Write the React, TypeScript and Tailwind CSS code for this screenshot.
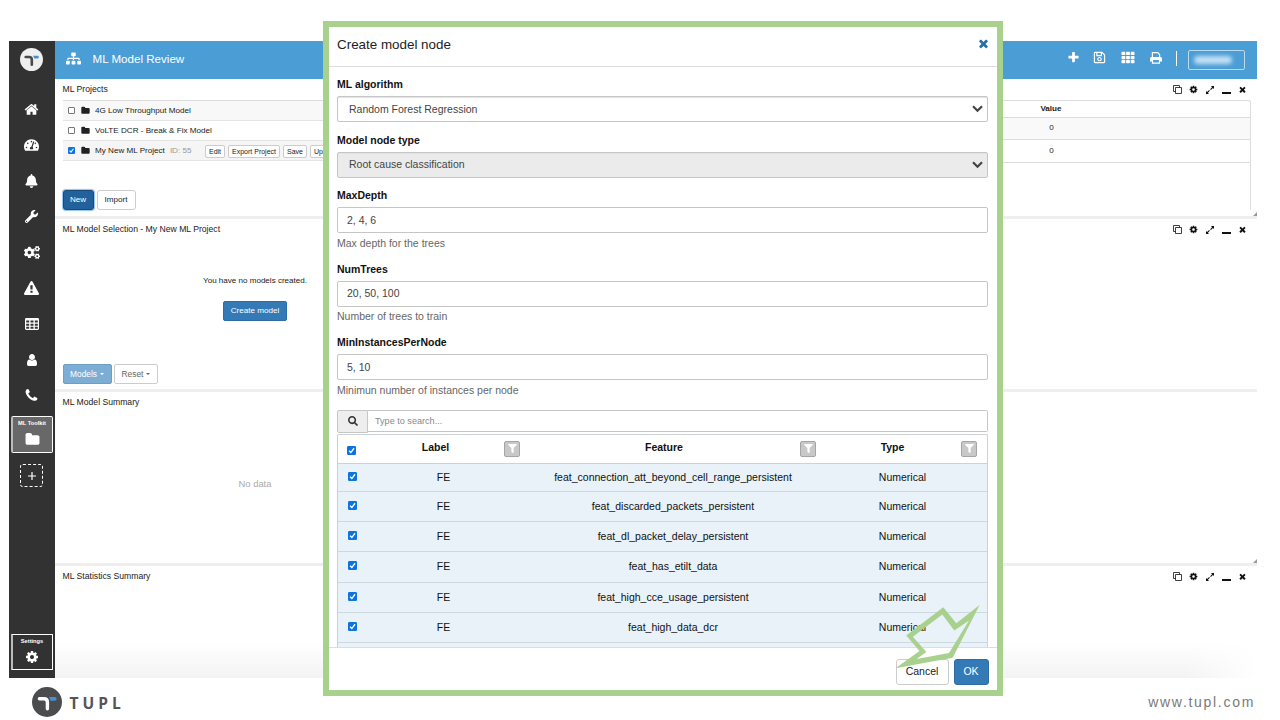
import type { ReactNode } from 'react'
import {
  FaBell,
  FaCogs,
  FaFilter,
  FaRegSave,
  FaSearch,
  FaSitemap,
  FaTachometerAlt,
  FaTh,
  FaWrench,
} from 'react-icons/fa'

const paths = {
  home: 'M1472 992v480q0 26-19 45t-45 19h-384v-384h-256v384h-384q-26 0-45-19t-19-45v-480q0-1 .5-3t.5-3l575-474 575 474q1 2 1 6zm223-69l-62 74q-8 9-21 11h-3q-13 0-21-7l-692-577-692 577q-12 8-24 7-13-2-21-11l-62-74q-8-10-7-23.5t11-21.5l719-599q32-26 76-26t76 26l244 204v-195q0-14 9-23t23-9h192q14 0 23 9t9 23v408l219 182q10 8 11 21.5t-7 23.5z',
  folder: 'M1728 608v704q0 92-66 158t-158 66h-1216q-92 0-158-66t-66-158v-960q0-92 66-158t158-66h320q92 0 158 66t66 158v32h672q92 0 158 66t66 158z',
  user: 'M1536 1399q0 109-62.5 187t-150.5 78h-854q-88 0-150.5-78t-62.5-187q0-85 8.5-160.5t31.5-152 58.5-131 94-89 134.5-34.5q131 128 313 128t313-128q76 0 134.5 34.5t94 89 58.5 131 31.5 152 8.5 160.5zm-256-887q0 159-112.5 271.5t-271.5 112.5-271.5-112.5-112.5-271.5 112.5-271.5 271.5-112.5 271.5 112.5 112.5 271.5z',
  phone: 'M1600 1240q0 27-10 70.5t-21 68.5q-21 50-122 106-94 51-186 51-27 0-53-3.5t-57.5-12.5-47-14.5-55.5-20.5-49-18q-98-35-175-83-127-79-264-216t-216-264q-48-77-83-175-3-9-18-49t-20.5-55.5-14.5-47-12.5-57.5-3.5-53q0-92 51-186 56-101 106-122 25-11 68.5-21t70.5-10q14 0 21 3 18 6 53 76 11 19 30 54t35 63.5 31 53.5q3 4 17.5 25t21.5 35.5 7 28.5q0 20-28.5 50t-62 55-62 53-28.5 46q0 9 5 22.5t8.5 20.5 14 24 11.5 19q76 137 174 235t235 174q2 1 19 11.5t24 14 20.5 8.5 22.5 5q18 0 46-28.5t53-62 55-62 50-28.5q14 0 28.5 7t35.5 21.5 25 17.5q25 15 53.5 31t63.5 35 54 30q70 35 76 53 3 7 3 21z',
  warning: 'M1024 1375v-190q0-14-9.5-23.5t-22.5-9.5h-192q-13 0-22.5 9.5t-9.5 23.5v190q0 14 9.5 23.5t22.5 9.5h192q13 0 22.5-9.5t9.5-23.5zm-2-374l18-459q0-12-10-19-13-11-24-11h-220q-11 0-24 11-10 7-10 21l17 457q0 10 10 16.5t24 6.5h185q14 0 23.5-6.5t10.5-16.5zm-14-934l768 1408q35 63-2 126-17 29-46.5 46t-63.5 17h-1536q-34 0-63.5-17t-46.5-46q-37-63-2-126l768-1408q17-31 47-49t65-18 65 18 47 49z',
  times: 'M1490 1322q0 40-28 68l-136 136q-28 28-68 28t-68-28l-294-294-294 294q-28 28-68 28t-68-28l-136-136q-28-28-28-68t28-68l294-294-294-294q-28-28-28-68t28-68l136-136q28-28 68-28t68 28l294 294 294-294q28-28 68-28t68 28l136 136q28 28 28 68t-28 68l-294 294 294 294q28 28 28 68z',
  plus: 'M1600 736v192q0 40-28 68t-68 28h-416v416q0 40-28 68t-68 28h-192q-40 0-68-28t-28-68v-416h-416q-40 0-68-28t-28-68v-192q0-40 28-68t68-28h416v-416q0-40 28-68t68-28h192q40 0 68 28t28 68v416h416q40 0 68 28t28 68z',
  cog: 'M1152 896q0-106-75-181t-181-75-181 75-75 181 75 181 181 75 181-75 75-181zm512-109v222q0 12-8 23t-20 13l-185 28q-19 54-39 91 35 50 107 138 10 12 10 25t-9 23q-27 37-99 108t-94 71q-12 0-26-9l-138-108q-44 23-91 38-16 136-29 186-7 28-36 28h-222q-14 0-24.5-8.5t-11.5-21.5l-28-184q-49-16-90-37l-141 107q-10 9-25 9-14 0-25-11-126-114-165-168-7-10-7-23 0-12 8-23 15-21 51-66.5t54-70.5q-27-50-41-99l-183-27q-13-2-21-12.5t-8-23.5v-222q0-12 8-23t19-13l186-28q14-46 39-92-40-57-107-138-10-12-10-24 0-10 9-23 26-36 98.5-107.5t94.5-71.5q13 0 26 10l138 107q44-23 91-38 16-136 29-186 7-28 36-28h222q14 0 24.5 8.5t11.5 21.5l28 184q49 16 90 37l142-107q9-9 24-9 13 0 25 10 129 119 165 170 7 8 7 22 0 12-8 23-15 21-51 66.5t-54 70.5q26 50 41 98l183 28q13 2 21 12.5t8 23.5z',
}

function Icon({ name, className }: { name: keyof typeof paths; className: string }) {
  return (
    <svg viewBox="0 0 1792 1792" fill="currentColor" className={className}>
      <path d={paths[name]} />
    </svg>
  )
}

function TableIcon() {
  return (
    <svg viewBox="0 0 14 12" className="w-[14px] h-[12px]">
      <rect width="14" height="12" rx="1.4" fill="#fff" />
      <path
        fill="#323232"
        d="M1.2 2.6h3v2h-3zM5.5 2.6h3v2h-3zM9.8 2.6h3v2h-3zM1.2 5.7h3v2h-3zM5.5 5.7h3v2h-3zM9.8 5.7h3v2h-3zM1.2 8.8h3v2h-3zM5.5 8.8h3v2h-3zM9.8 8.8h3v2h-3z"
      />
    </svg>
  )
}

function PrintIcon({ className }: { className: string }) {
  return (
    <svg viewBox="0 0 12 12" className={className}>
      <path d="M2.4 5.5V.7h5.4l1.8 1.8v3" fill="none" stroke="#fff" strokeWidth="1.2" />
      <path d="M1.5 5h9A1.5 1.5 0 0 1 12 6.5v3h-2V8H2v1.5H0v-3A1.5 1.5 0 0 1 1.5 5z" fill="#fff" />
      <path d="M2.5 8v3.2h7V8" fill="none" stroke="#fff" strokeWidth="1.2" />
    </svg>
  )
}

function Logo({ className, bg, fg }: { className: string; bg: string; fg: string }) {
  return (
    <svg viewBox="0 0 30 30" className={className}>
      <circle cx="15" cy="15" r="15" fill={bg} />
      <path d="M7.4 11.8H12q3.4 0 3.4 3.4v6.6" fill="none" stroke={fg} strokeWidth="3.4" strokeLinecap="round" />
      <path d="M16.8 10.1h6a1.8 1.8 0 0 1 0 3.6h-4.3q-.3-2-1.7-3.6z" fill="#4a90d0" />
    </svg>
  )
}

function Checkbox({ checked, className }: { checked?: boolean; className: string }) {
  if (!checked) {
    return <span className={`block border border-[#777] rounded-[1px] bg-white ${className}`} />
  }
  return (
    <svg viewBox="0 0 10 10" className={className}>
      <rect width="10" height="10" rx="1.5" fill="#0b74e0" />
      <path d="M2.3 5.2l2 2.1 3.5-4.8" fill="none" stroke="#fff" strokeWidth="1.5" />
    </svg>
  )
}

const navIcons: ReactNode[] = [
  <Icon name="home" className="w-[15px] h-[15px]" />,
  <FaTachometerAlt className="w-[15px] h-[14px]" />,
  <FaBell className="w-[13px] h-[14px]" />,
  <FaWrench className="w-[13px] h-[13px]" />,
  <FaCogs className="w-[16px] h-[15px]" />,
  <Icon name="warning" className="w-[15px] h-[15px]" />,
  <TableIcon />,
  <Icon name="user" className="w-[14px] h-[14px]" />,
  <Icon name="phone" className="w-[15px] h-[15px]" />,
]

function Sidebar() {
  return (
    <aside className="w-[46px] h-full bg-[#323232] text-white flex flex-col items-center shrink-0 pr-px">
      <Logo className="w-[23px] h-[23px] mt-[7px]" bg="#efefef" fg="#4a4a4a" />
      <nav className="mt-[20.5px] flex flex-col items-center">
        {navIcons.map((icon, i) => (
          <div key={i} className="h-[35.8px] flex items-center justify-center">
            {icon}
          </div>
        ))}
      </nav>
      <div className="mt-[2px] w-[42px] h-[37px] shrink-0 border border-l-2 border-white border-l-[#bbb] rounded-[2px] bg-[#686868] flex flex-col items-center">
        <span className="mt-[3px] text-[5.7px] leading-[7px] font-bold">ML Toolkit</span>
        <Icon name="folder" className="w-[15px] h-[15px] mt-[5px]" />
      </div>
      <div className="mt-[11.5px] w-[23px] h-[23px] shrink-0 border border-dashed border-white rounded-[3px] flex items-center justify-center">
        <svg viewBox="0 0 8 8" className="w-[8px] h-[8px]" stroke="#fff" strokeWidth="1.2">
          <path d="M4 0v8M0 4h8" />
        </svg>
      </div>
      <div className="mt-auto mb-[8px] w-[42px] h-[36px] shrink-0 border border-l-2 border-white border-l-[#bbb] rounded-[1px] flex flex-col items-center">
        <span className="mt-[3px] text-[5.7px] leading-[7px] font-bold">Settings</span>
        <Icon name="cog" className="w-[14px] h-[14px] mt-[5px]" />
      </div>
    </aside>
  )
}

function TopBar() {
  return (
    <header className="h-[38px] shrink-0 bg-[#4b9dd6] text-white flex items-center pl-[11px] pr-[12.5px]">
      <FaSitemap className="w-[15px] h-[13px] mb-[4px]" />
      <h1 className="ml-[11.5px] mb-[2px] text-[11.6px] leading-[16px]">ML Model Review</h1>
      <div className="ml-auto flex items-center mb-[5px]">
        <Icon name="plus" className="w-[13px] h-[13px]" />
        <FaRegSave className="w-[13px] h-[13px] ml-[13.5px]" />
        <FaTh className="w-[14px] h-[13px] ml-[14.5px]" />
        <PrintIcon className="w-[12px] h-[12px] ml-[15px]" />
      </div>
      <span className="w-px h-[15px] bg-white ml-[14px] mb-[4px]" />
      <div className="ml-[11px] mb-px w-[57px] h-[20px] border border-[#b9dbf2] rounded-[2px] flex items-center pl-[5px]">
        <span className="w-[38px] h-[8px] rounded-full bg-[#c3e0f4] blur-[2px]" />
      </div>
    </header>
  )
}

function PanelTools() {
  return (
    <div className="flex items-center text-[#111] h-[10px]">
      <svg viewBox="0 0 9 9" className="w-[9px] h-[9px]" fill="none" stroke="currentColor" strokeWidth=".8">
        <path d="M2.5 2.5h6v6h-6zM2.5 6.5h-2v-6h6v2" />
      </svg>
      <Icon name="cog" className="w-[9px] h-[9px] ml-[7.5px]" />
      <svg viewBox="0 0 8 8" className="w-[8px] h-[8px] ml-[8px]" fill="currentColor">
        <path d="M5 0h3v3L6.9 2 4.9 4l-.8-.8 2-2zM0 8V5l1.1 1L3.1 4l.8.8-2 2L3 8z" />
      </svg>
      <span className="w-[9px] h-[2px] mt-[6px] ml-[8px] bg-[#111]" />
      <Icon name="times" className="w-[9px] h-[9px] ml-[7px]" />
    </div>
  )
}

function Panel({
  title,
  className,
  tools = true,
  children,
}: {
  title: string
  className: string
  tools?: boolean
  children?: ReactNode
}) {
  return (
    <section className={`shrink-0 pl-[7.5px] flex flex-col ${className}`}>
      <div className="h-[21px] shrink-0 flex items-center justify-between pr-[10px]">
        <h2 className="mb-[2px] text-[8.65px] leading-[12px] text-[#222]">{title}</h2>
        {tools && <PanelTools />}
      </div>
      {children}
    </section>
  )
}

function Grip() {
  return (
    <svg viewBox="0 0 4 4" className="w-[4px] h-[4px] self-end mt-auto" fill="#999">
      <path d="M4 0v4H0z" />
    </svg>
  )
}

function MiniButton({ children }: { children: ReactNode }) {
  return (
    <span className="h-[13px] px-[3px] border border-[#ccc] rounded-[2px] bg-white text-[7px] leading-[12px] text-[#222] whitespace-nowrap">
      {children}
    </span>
  )
}

function Projects() {
  return (
    <div className="flex grow">
      <div className="w-[640px] text-[8.1px] text-[#222]">
        <div className="h-[20px] border-t border-[#ddd] bg-[#f8f8f8] flex items-center pl-[5px]">
          <Checkbox className="w-[7px] h-[7px]" />
          <Icon name="folder" className="w-[9px] h-[9px] ml-[6.5px]" />
          <span className="ml-[5px] mt-[2px]">4G Low Throughput Model</span>
        </div>
        <div className="h-[20px] border-t border-[#e4e4e4] flex items-center pl-[5px]">
          <Checkbox className="w-[7px] h-[7px]" />
          <Icon name="folder" className="w-[9px] h-[9px] ml-[6.5px]" />
          <span className="ml-[5px] mt-[2px]">VoLTE DCR - Break &amp; Fix Model</span>
        </div>
        <div className="h-[21px] border-y border-[#e4e4e4] bg-[#f5f5f5] flex items-center pl-[5px]">
          <Checkbox checked className="w-[7px] h-[7px]" />
          <Icon name="folder" className="w-[9px] h-[9px] ml-[6.5px]" />
          <span className="ml-[5px] mt-[2px]">My New ML Project</span>
          <span className="ml-[5px] mt-[2px] text-[#999]">ID: 55</span>
          <div className="ml-[13.5px] mt-px flex gap-[3px]">
            <MiniButton>Edit</MiniButton>
            <MiniButton>Export Project</MiniButton>
            <MiniButton>Save</MiniButton>
            <MiniButton>Update</MiniButton>
          </div>
        </div>
        <div className="mt-[29px] flex gap-[3px]">
          <button className="w-[31px] h-[20px] rounded-[3px] bg-[#22619c] border border-[#1b4a79] text-white text-[8.1px] shadow-[0_0_1px_1px_#8ec1ee]">
            New
          </button>
          <button className="w-[39px] h-[20px] rounded-[3px] bg-white border border-[#ccc] text-[8.1px]">Import</button>
        </div>
      </div>
      <div className="w-[548px] h-[110px] border-t border-r border-[#ddd] rounded-tr-[3px] text-[8.1px] text-[#222]">
        <div className="h-[17px] border-b border-[#ddd] grid grid-cols-[150px_397px] items-center text-center font-bold">
          <span />
          <span>Value</span>
        </div>
        {[0, 0].map((value, i) => (
          <div
            key={i}
            className="h-[22px] odd:h-[23px] even:bg-[#f9f9f9] border-b border-[#ddd] grid grid-cols-[150px_398px] items-center text-center"
          >
            <span />
            <span>{value}</span>
          </div>
        ))}
      </div>
      <div className="ml-auto flex">
        <Grip />
      </div>
    </div>
  )
}

function Caret() {
  return <span className="inline-block ml-[3px] mb-[2px] border-x-2 border-x-transparent border-t-2 border-t-current" />
}

function ModelSelection() {
  return (
    <div className="w-[385px] grow flex flex-col items-center">
      <p className="mt-[35px] text-[8.05px] leading-[12px] text-[#222]">You have no models created.</p>
      <button className="mt-[14px] w-[64px] h-[20px] rounded-[2px] bg-[#337ab7] border border-[#2e6da4] text-white text-[8.1px] leading-[18px]">
        Create model
      </button>
      <div className="mt-[42.5px] self-start flex gap-[2.5px] text-[8.4px] leading-[18px]">
        <button className="w-[49px] h-[20px] rounded-[2px] bg-[#7badd5] border border-[#6f9dc4] text-white">
          Models
          <Caret />
        </button>
        <button className="w-[44px] h-[20px] rounded-[2px] bg-white border border-[#ccc] text-[#666]">
          Reset
          <Caret />
        </button>
      </div>
    </div>
  )
}

function Workspace() {
  return (
    <main className="w-[1202px] h-full flex flex-col">
      <TopBar />
      <Panel title="ML Projects" className="h-[137px]">
        <Projects />
      </Panel>
      <div className="h-[3px] shrink-0 bg-[#eee]" />
      <Panel title="ML Model Selection - My New ML Project" className="h-[170px]">
        <ModelSelection />
      </Panel>
      <div className="h-[3px] shrink-0 bg-[#eee]" />
      <Panel title="ML Model Summary" className="h-[171px]" tools={false}>
        <p className="w-[385px] mt-[65px] text-center text-[9.4px] leading-[12px] text-[#aaa]">No data</p>
        <Grip />
      </Panel>
      <div className="h-[3px] shrink-0 bg-[#eee]" />
      <Panel
        title="ML Statistics Summary"
        className="grow bg-[linear-gradient(to_right,transparent_94%,#fff),linear-gradient(#fff_68%,#f3f3f3)]"
      />
    </main>
  )
}

function Label({ children, className }: { children: ReactNode; className: string }) {
  return <label className={`block text-[10.5px] leading-[14px] font-bold text-[#111] ${className}`}>{children}</label>
}

function SelectBox({ value, className }: { value: string; className: string }) {
  return (
    <div
      className={`h-[26px] mt-[5px] border border-[#c6c6c6] rounded-[2px] shadow-[inset_0_1px_1px_#e4e4e4] flex items-center justify-between pl-[11px] pr-[4px] text-[10.5px] text-[#444] ${className}`}
    >
      <span className="mt-px">{value}</span>
      <svg viewBox="0 0 11 8" className="w-[11px] h-[8px]" fill="none" stroke="#444" strokeWidth="2.2">
        <path d="M1 1.3l4.5 4.4L10 1.3" />
      </svg>
    </div>
  )
}

function TextField({ value, help }: { value: string; help: string }) {
  return (
    <>
      <div className="h-[26px] mt-[5px] border border-[#c6c6c6] rounded-[2px] flex items-center pl-[9px] text-[10.5px] text-[#444]">
        <span className="mt-px">{value}</span>
      </div>
      <p className="mt-[2.5px] text-[10.5px] leading-[14px] text-[#666]">{help}</p>
    </>
  )
}

function FilterButton() {
  return (
    <span className="w-[16px] h-[16px] border border-[#a5a5a5] rounded-[2px] bg-[#c8c8c8] text-white flex items-center justify-center">
      <FaFilter className="w-[9px] h-[9px]" />
    </span>
  )
}

const features = [
  'feat_connection_att_beyond_cell_range_persistent',
  'feat_discarded_packets_persistent',
  'feat_dl_packet_delay_persistent',
  'feat_has_etilt_data',
  'feat_high_cce_usage_persistent',
  'feat_high_data_dcr',
]

function FeatureTable() {
  return (
    <div className="mt-px h-[214px] overflow-hidden border border-b-0 border-[#ccd2d6] rounded-t-[2px] text-[10.5px] text-[#111]">
      <div className="h-[29px] border-b border-[#ccd2d6] grid grid-cols-[29px_137px_16px_8px_272px_16px_8px_137px_16px] items-center text-center font-bold">
        <Checkbox checked className="w-[9px] h-[9px] ml-[9px] mt-[4px]" />
        <span className="mb-px">Label</span>
        <FilterButton />
        <span />
        <span className="mb-px">Feature</span>
        <FilterButton />
        <span />
        <span className="mb-px">Type</span>
        <FilterButton />
      </div>
      <div>
        {features.map((feature) => (
          <div
            key={feature}
            className="h-[30.2px] first:h-[28.5px] bg-[#e9f2f8] border-b border-[#cdd8df] grid grid-cols-[29px_153px_306px_153px] items-center text-center leading-[14px]"
          >
            <Checkbox checked className="w-[9px] h-[9px] ml-[10px] mb-[2px]" />
            <span className="mb-px">FE</span>
            <span className="mb-px">{feature}</span>
            <span className="mb-px">Numerical</span>
          </div>
        ))}
      </div>
      <div className="h-[10px] bg-[#e9f2f8]" />
    </div>
  )
}

function CreateNodeModal() {
  return (
    <div className="absolute left-[323px] top-[21px] w-[680px] h-[675px] border-[6px] border-[#a9d18e] bg-white flex flex-col">
      <div className="h-[40px] shrink-0 border-b border-[#ddd] flex items-center justify-between pl-[8px] pr-[7px] pb-[4px]">
        <h2 className="text-[13.4px] leading-[18px] text-[#222]">Create model node</h2>
        <Icon name="times" className="w-[13px] h-[13px] mb-[2px] text-[#2a6ea6]" />
      </div>
      <div className="h-[580px] shrink-0 overflow-hidden pl-[8px] pr-[9px]">
        <Label className="mt-[10px]">ML algorithm</Label>
        <SelectBox value="Random Forest Regression" className="bg-white" />
        <Label className="mt-[10.5px]">Model node type</Label>
        <SelectBox value="Root cause classification" className="bg-[#ebebeb]" />
        <Label className="mt-[10.5px]">MaxDepth</Label>
        <TextField value="2, 4, 6" help="Max depth for the trees" />
        <Label className="mt-[12px]">NumTrees</Label>
        <TextField value="20, 50, 100" help="Number of trees to train" />
        <Label className="mt-[12px]">MinInstancesPerNode</Label>
        <TextField value="5, 10" help="Minimun number of instances per node" />
        <div className="mt-[13px] flex h-[23px]">
          <div className="w-[31px] h-[23px] border border-[#c6c6c6] rounded-l-[2px] bg-[#eee] flex items-center justify-center text-[#333]">
            <FaSearch className="w-[10px] h-[10px]" />
          </div>
          <div className="grow h-[22px] border border-l-0 border-[#c6c6c6] rounded-r-[2px] pl-[7px] text-[9.1px] leading-[20px] text-[#888]">
            Type to search...
          </div>
        </div>
        <FeatureTable />
      </div>
      <div className="grow border-t border-[#ddd] flex justify-end gap-[5px] pt-[11px] pr-[8.5px] text-[10.5px]">
        <button className="w-[53px] h-[26px] border border-[#ccc] rounded-[3px] text-[#222]">Cancel</button>
        <button className="w-[35px] h-[26px] border border-[#2e6da4] rounded-[3px] bg-[#337ab7] text-white">OK</button>
      </div>
    </div>
  )
}

export default function App() {
  return (
    <div className="relative w-[1280px] h-[720px] overflow-hidden bg-white font-['Liberation_Sans',Arial,sans-serif]">
      <div className="pt-[41px] pl-[9px] h-[678px] flex">
        <Sidebar />
        <Workspace />
      </div>
      <footer className="h-[42px] flex items-center pl-[32px] pr-[25px]">
        <Logo className="w-[30px] h-[30px] mt-[6px]" bg="#4a4c4d" fg="#fff" />
        <span className="ml-[7.5px] mt-[8px] font-['Open_Sans',sans-serif] font-bold text-[15.5px] leading-[20px] tracking-[4px] text-[#555]">
          TUPL
        </span>
        <span className="ml-auto mt-[6px] text-[14px] leading-[18px] tracking-[1.7px] text-[#7a7a7a]">www.tupl.com</span>
      </footer>
      <CreateNodeModal />
      {/* callout arrow pointing at the dialog buttons */}
      <svg viewBox="0 0 90 70" className="absolute left-[892px] top-[602px] w-[90px] h-[70px]" fill="#a9d18e" fillRule="evenodd">
        <path d="M51.3 5.2L64.3 21.2 87.6 3 60.7 55.8 3.5 66.2 27.5 49 14.2 33.5zM50.3 12.5L20.9 34.7 34.3 50 24.7 57 57 51 77 18.6 62.3 28.5z" />
      </svg>
    </div>
  )
}
